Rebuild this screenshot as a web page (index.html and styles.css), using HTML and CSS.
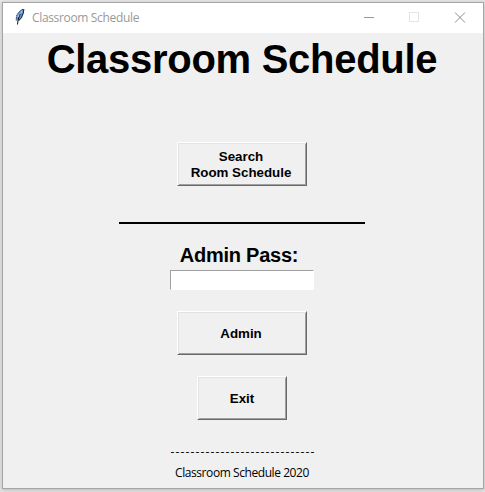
FILE: index.html
```html
<!DOCTYPE html>
<html lang="en">
<head>
<meta charset="utf-8">
<title>Classroom Schedule</title>
<link rel="stylesheet" href="styles.css">
</head>
<body>
<div class="window">
  <header class="titlebar">
    <svg class="feather" width="12" height="18" viewBox="0 0 12 18">
      <path d="M9.500 1C6.500 2 3.500 5 2.500 8.500L2.300 12.500H4.800L7.500 9.500 8.800 6.500Z" fill="#5b9bea"/>
      <path d="M9.800 1C9.900 4 9 7 7.500 9.500L4.800 12.500" fill="none" stroke="#1d2632" stroke-width="1.100"/>
      <path d="M9 1.200C6.500 2 3.800 5 2.500 8L2.200 12.500" fill="none" stroke="#3a4654" stroke-width="1" stroke-dasharray="2 .6"/>
      <path d="M7 5C5 8 4 11 3.500 16.500" fill="none" stroke="#111" stroke-width="1"/>
      <path d="M8 3L6.500 6M5 6.500L4 9" stroke="#a9d0fb" stroke-width="1"/>
    </svg>
    <span class="caption">Classroom Schedule</span>
    <svg class="controls" width="104" height="12" viewBox="0 0 104 12">
      <path d="M1 6.500H11" stroke="#999" fill="none"/>
      <rect x="46.500" y="1.500" width="9" height="9" stroke="#e5e5e5" fill="none"/>
      <path d="M92 1.500L102 11.500M102 1.500L92 11.500" stroke="#8c8c8c" fill="none"/>
    </svg>
  </header>
  <main class="content">
    <h1 class="heading">Classroom Schedule</h1>
    <button class="btn search">Search<br>Room Schedule</button>
    <div class="rule"></div>
    <label class="pass-label" for="pass">Admin Pass:</label>
    <input class="pass" id="pass" type="password">
    <button class="btn admin">Admin</button>
    <button class="btn exit">Exit</button>
    <div class="dashes">-----------------------------</div>
    <footer class="footer">Classroom Schedule 2020</footer>
  </main>
</div>
</body>
</html>
```
FILE: styles.css
```css
* { box-sizing: border-box; }
body {
  margin: 0;
  width: 485px;
  height: 492px;
  padding: 2px 1px 3px 2px;
  background: #e6e6e6;
  overflow: hidden;
}
.window {
  width: 482px;
  height: 487px;
  border: 1px solid #a5a5a5;
  background: #f0f0f0;
  box-shadow: 0 1px 4px rgba(0, 0, 0, .22);
}
.titlebar {
  height: 30px;
  display: flex;
  align-items: center;
  padding: 0 16px 0 11px;
  background: #fff;
}
.feather {
  margin-top: -2px;
  margin-right: 6px;
}
.caption {
  flex: 1;
  font: 12px/16px "Open Sans", sans-serif;
  letter-spacing: -.34px;
  color: #999;
  white-space: nowrap;
}
.controls { margin-top: -2px; }
.content {
  display: flex;
  flex-direction: column;
  align-items: center;
  width: 478px;
  color: #000;
  font-family: "Liberation Sans", sans-serif;
}
.heading {
  margin: 3px 0 0;
  font-size: 40px;
  line-height: 46px;
  font-weight: bold;
  letter-spacing: -.28px;
  white-space: nowrap;
}
.btn {
  width: 130px;
  height: 44px;
  padding: 2px 2px 0 0;
  border: 1px solid;
  border-color: #fff #696969 #696969 #fff;
  box-shadow: inset 1px 1px #e3e3e3, inset -1px -1px #a0a0a0;
  background: #f0f0f0;
  color: #000;
  font: bold 13.33px/16px "Liberation Sans", sans-serif;
}
.search { margin-top: 60px; }
.rule {
  width: 246px;
  height: 2px;
  margin-top: 36px;
  background: #000;
}
.pass-label {
  margin-top: 19px;
  margin-right: 6px;
  font-size: 20px;
  line-height: 24px;
  font-weight: bold;
  letter-spacing: -.25px;
}
.pass {
  width: 144px;
  height: 20px;
  margin: 3px 0 0;
  padding: 0 2px;
  border: 1px solid;
  border-color: #a0a0a0 #fff #fff #a0a0a0;
  background: #fff;
  outline: none;
}
.admin { margin-top: 21px; }
.exit {
  width: 90px;
  margin-top: 21px;
  padding-right: 0;
}
.dashes {
  margin-top: 24px;
  margin-left: 2px;
  font: 12px/16px "Open Sans", sans-serif;
  letter-spacing: 1.14px;
  white-space: nowrap;
}
.footer {
  margin-top: 5px;
  font: 12px/16px "Open Sans", sans-serif;
  letter-spacing: -.43px;
  white-space: nowrap;
}
```
